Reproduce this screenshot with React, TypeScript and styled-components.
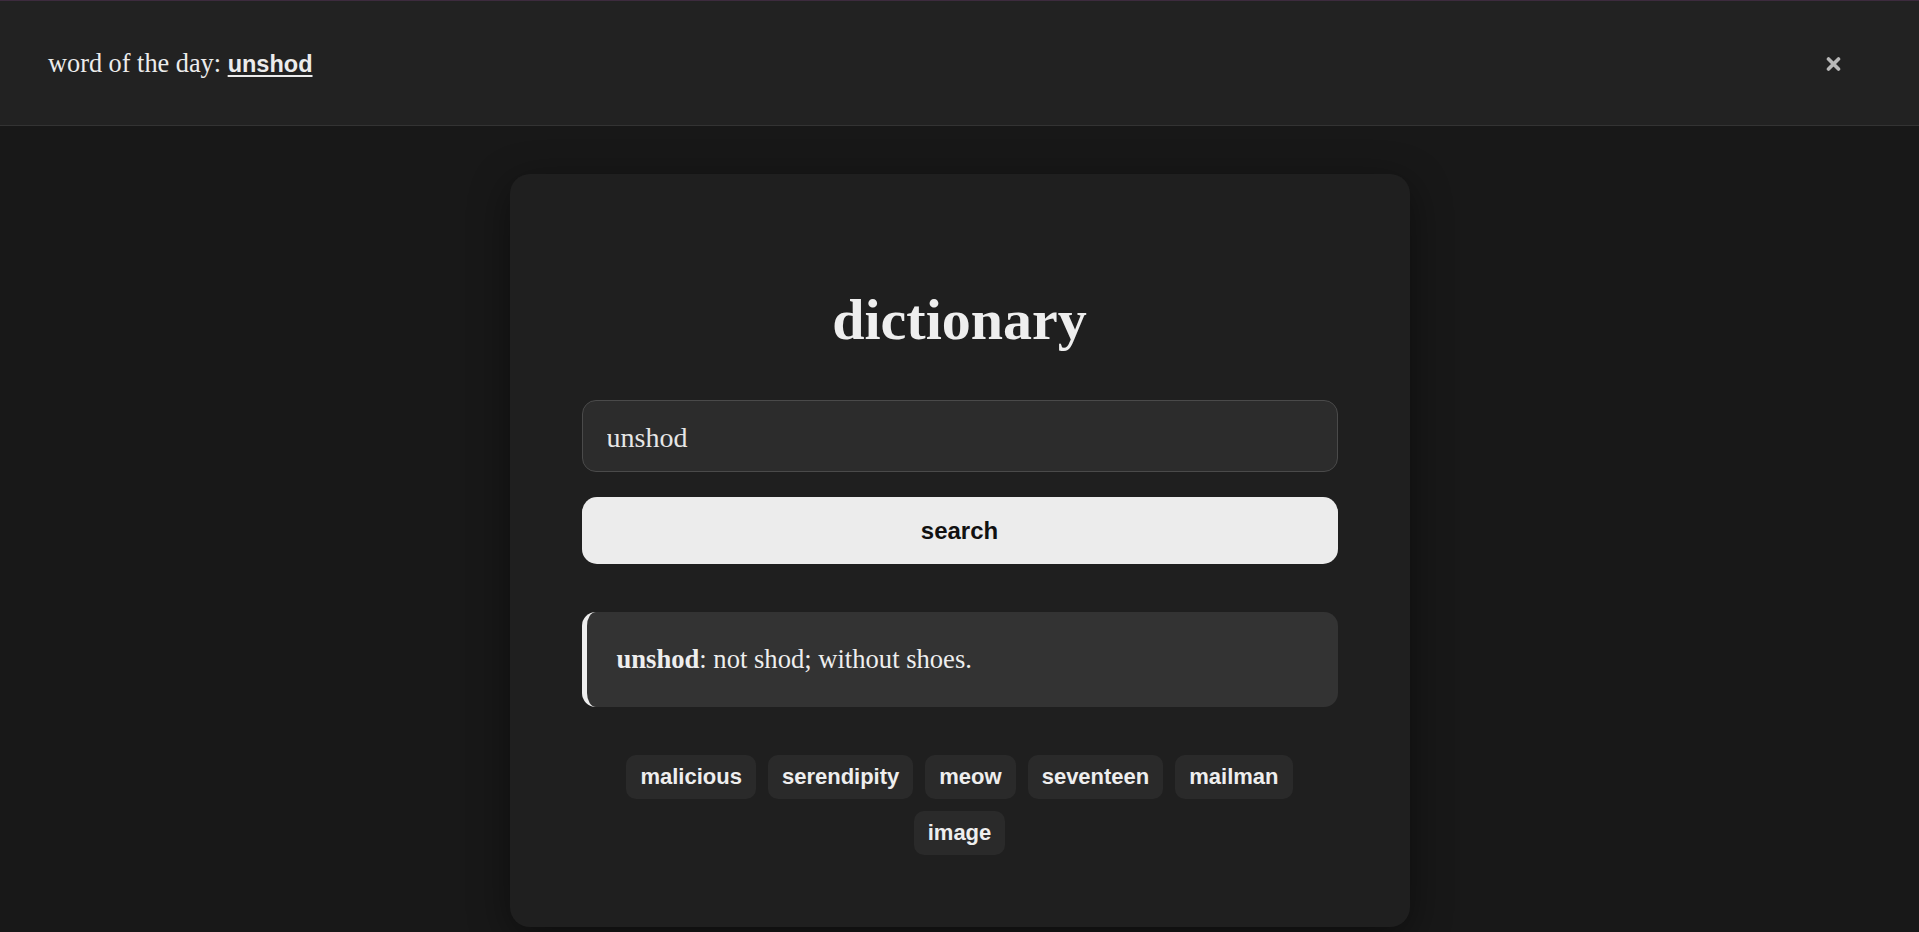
import React, { useState } from 'react';
import styled, { createGlobalStyle } from 'styled-components';

const GlobalStyle = createGlobalStyle`
    html, body {
        margin: 0;
        padding: 0;
        background: #181818;
        color: #eeeeee;
        font-family: 'Liberation Serif', 'Times New Roman', serif;
    }
    * {
        box-sizing: border-box;
    }
`;

const Page = styled.div`
    min-height: 100vh;
    display: flex;
    flex-direction: column;
    align-items: center;
`;

const Banner = styled.header`
    width: 100%;
    height: 126px;
    display: flex;
    align-items: center;
    justify-content: space-between;
    padding: 2px 78px 0 48px;
    background: #222222;
    border-top: 1px solid #3d2b3e;
    border-bottom: 1px solid #333333;
`;

const BannerText = styled.p`
    margin: 0;
    font-size: 26.3px;
    color: #ececec;
`;

const WordLink = styled.a`
    font-family: 'Liberation Sans', Arial, sans-serif;
    font-weight: 700;
    font-size: 23.5px;
    color: #ececec;
    text-decoration: underline;
    text-decoration-thickness: 2px;
    text-underline-offset: 3px;
    cursor: pointer;
`;

const CloseButton = styled.button`
    display: flex;
    align-items: center;
    justify-content: center;
    width: 16px;
    height: 18px;
    padding: 0;
    border: none;
    background: none;
    color: #b8b8b8;
    cursor: pointer;
`;

const Card = styled.main`
    width: 900px;
    margin-top: 48px;
    padding: 111px 72px 72px;
    background: #1f1f1f;
    border-radius: 20px;
    box-shadow: 0 10px 40px rgba(0, 0, 0, 0.45);
    display: flex;
    flex-direction: column;
`;

const Title = styled.h1`
    margin: 0 0 45px;
    font-size: 58px;
    line-height: 70px;
    font-weight: 700;
    text-align: center;
    color: #eeeeee;
`;

const SearchInput = styled.input`
    height: 72px;
    padding: 3px 24px 0;
    font-family: 'Liberation Serif', 'Times New Roman', serif;
    font-size: 28px;
    color: #e6e6e6;
    background: #2c2c2c;
    border: 1px solid #4a4a4a;
    border-radius: 14px;
    outline: none;
`;

const SearchButton = styled.button`
    height: 67px;
    margin-top: 25px;
    font-family: 'Liberation Sans', Arial, sans-serif;
    font-size: 24px;
    font-weight: 700;
    color: #111111;
    background: #ececec;
    border: none;
    border-radius: 15px;
    cursor: pointer;
`;

const Definition = styled.p`
    margin: 48px 0 0;
    padding: 32px 30px;
    font-size: 26.6px;
    line-height: 31px;
    color: #eeeeee;
    background: #333333;
    border-left: 5px solid #eeeeee;
    border-radius: 14px;
`;

const TagList = styled.div`
    display: flex;
    flex-wrap: wrap;
    justify-content: center;
    gap: 12px;
    margin-top: 48px;
`;

const Tag = styled.button`
    height: 44px;
    padding: 0 14px;
    font-family: 'Liberation Sans', Arial, sans-serif;
    font-size: 22px;
    font-weight: 700;
    color: #eeeeee;
    background: #2a2a2a;
    border: none;
    border-radius: 10px;
    cursor: pointer;
`;

const recent = ['malicious', 'serendipity', 'meow', 'seventeen', 'mailman', 'image'];

export default function App() {
    const [query, setQuery] = useState('unshod');

    return (
        <>
            <GlobalStyle />
            <Page>
                <Banner>
                    <BannerText>
                        word of the day: <WordLink>unshod</WordLink>
                    </BannerText>
                    <CloseButton aria-label="close">
                        <svg width="15" height="16" viewBox="0 0 15 16">
                            <path d="M2.5 3 L12.5 13 M12.5 3 L2.5 13" stroke="currentColor" strokeWidth="3.6" strokeLinecap="round" />
                        </svg>
                    </CloseButton>
                </Banner>
                <Card>
                    <Title>dictionary</Title>
                    <SearchInput value={query} onChange={(e) => setQuery(e.target.value)} />
                    <SearchButton>search</SearchButton>
                    <Definition>
                        <b>unshod</b>: not shod; without shoes.
                    </Definition>
                    <TagList>
                        {recent.map((word) => (
                            <Tag key={word}>{word}</Tag>
                        ))}
                    </TagList>
                </Card>
            </Page>
        </>
    );
}
